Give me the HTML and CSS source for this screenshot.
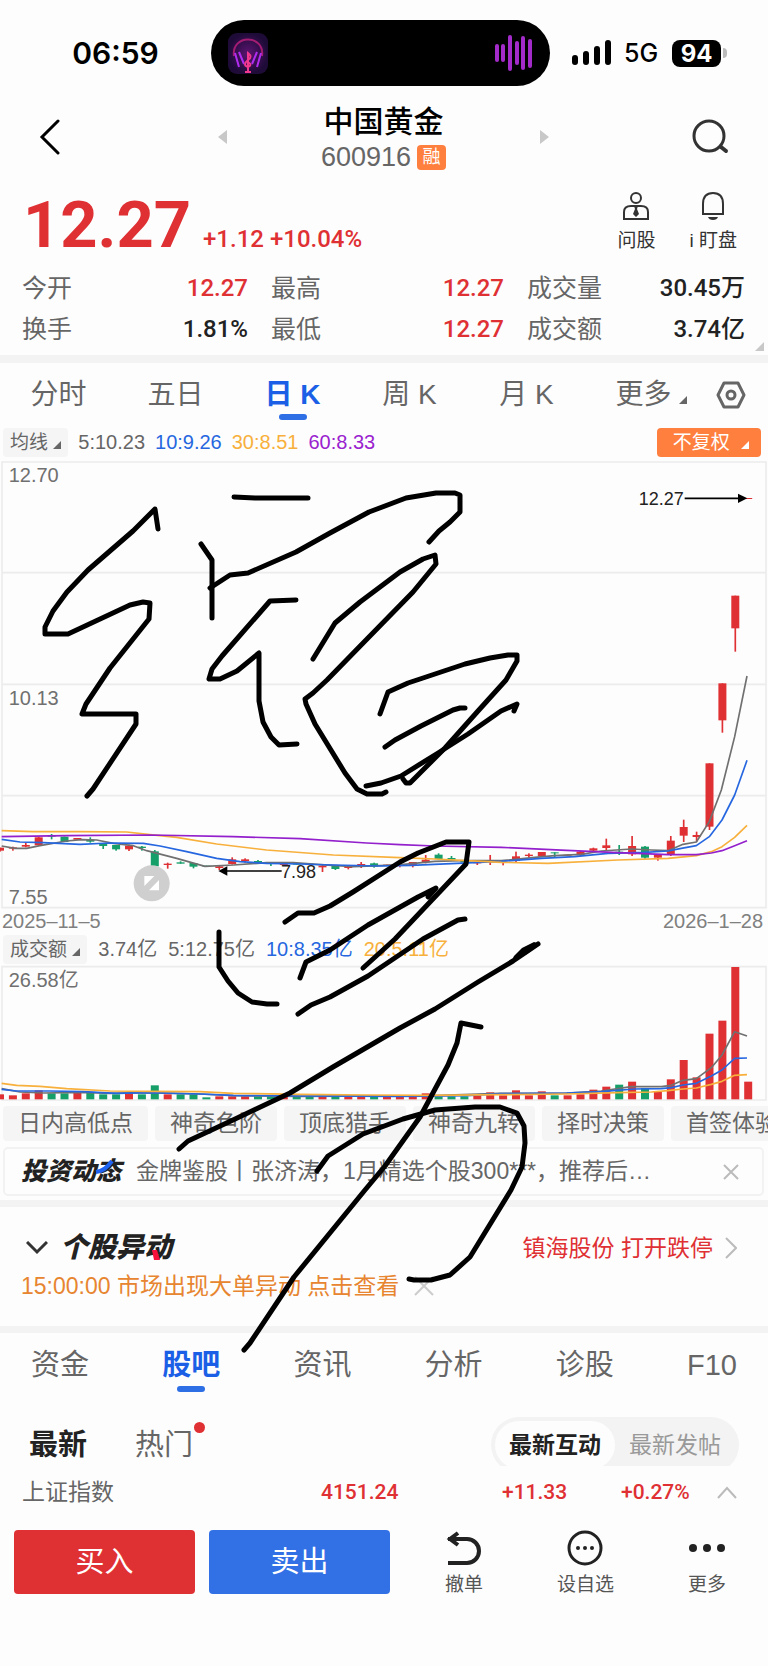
FILE: index.html
```
<!DOCTYPE html>
<html lang="zh-CN">

<head>
    <meta charset="utf-8">
    <meta name="viewport" content="width=device-width, initial-scale=1">
    <title>中国黄金 600916</title>
    <link rel="stylesheet" href="styles.css">
</head>

<body>
    <div class="phone">
        <div class="statusbar">
            <div class="time">06:59</div>
            <div class="island">
                <svg class="cover" viewBox="0 0 40 41">
                    <defs>
                        <radialGradient id="coverbg">
                            <stop offset="0" stop-color="#5b1470" />
                            <stop offset="1" stop-color="#1e0b38" />
                        </radialGradient>
                    </defs>
                    <rect width="40" height="41" rx="9" fill="url(#coverbg)" />
                    <path d="M6 23C3 1 37 1 34 23" fill="none" stroke="#a31d73" stroke-width="2" />
                    <path d="M7 20l4 14M11 19l5 12M33 20l-4 14M29 19l-5 12" stroke="#b02df0" stroke-width="2" />
                    <path d="M20 38V20q5 4 0 7q-6 5 0 7q5-2 0-5M17 39h6" fill="none" stroke="#f0388e" stroke-width="2" />
                </svg>
                <svg class="waves" viewBox="0 0 38 36">
                    <path d="M2 11v14M8 11v14M15 2v32M22 8v20M28 3v30M35 6v25" stroke="#a32bc9" stroke-width="4" stroke-linecap="round" />
                </svg>
            </div>
            <div class="signals">
                <svg class="bars" viewBox="0 0 39 26">
                    <path d="M3 18v4M14 14v8M25 9v13M36 3v19" stroke="#000" stroke-width="6" stroke-linecap="round" />
                </svg>
                <span class="net">5G</span>
                <span class="battery">94</span><span class="nub"></span>
            </div>
        </div>

        <header class="head">
            <button class="icon-btn back" aria-label="返回">
                <svg width="22" height="36" viewBox="0 0 22 36"><path d="M20 2L4 18l16 16" fill="none" stroke="#000" stroke-width="3" stroke-linecap="round" /></svg>
            </button>
            <button class="icon-btn" aria-label="上一只">
                <svg width="10" height="14" viewBox="0 0 10 14"><path d="M9 0v14L0 7z" fill="#c8c8c8" /></svg>
            </button>
            <div class="name">
                <h1>中国黄金</h1>
                <div class="code">600916 <span class="badge">融</span></div>
            </div>
            <button class="icon-btn" aria-label="下一只">
                <svg width="10" height="14" viewBox="0 0 10 14"><path d="M1 0v14l9-7z" fill="#c8c8c8" /></svg>
            </button>
            <button class="icon-btn search" aria-label="搜索">
                <svg width="38" height="36" viewBox="0 0 38 36"><circle cx="17" cy="17" r="15" fill="none" stroke="#333" stroke-width="3" /><path d="M29 28l5 4" stroke="#333" stroke-width="4" stroke-linecap="round" /></svg>
            </button>
        </header>

        <section class="quote">
            <div class="price">12.27</div>
            <div class="change">+1.12 +10.04%</div>
            <div class="tools">
                <button class="tool">
                    <svg width="28" height="30" viewBox="0 0 28 30"><g fill="none" stroke="#333" stroke-width="2"><circle cx="14" cy="7" r="5" /><path d="M9 15q-7 0-7 6v7h24v-7q0-6-7-6z" /></g><path d="M12 15h4l-1 3 2 5-3 3-3-3 2-5z" fill="#333" /></svg>
                    问股
                </button>
                <button class="tool">
                    <svg width="28" height="30" viewBox="0 0 28 30"><path d="M4 23V13q0-11 10-11t10 11v10z" fill="none" stroke="#333" stroke-width="2" /><path d="M9 26h10q-1 3-5 3t-5-3z" fill="#333" /></svg>
                    i 盯盘
                </button>
            </div>
        </section>

        <dl class="stats">
            <div><dt>今开</dt><dd class="up">12.27</dd></div>
            <div><dt>最高</dt><dd class="up">12.27</dd></div>
            <div><dt>成交量</dt><dd>30.45万</dd></div>
            <div><dt>换手</dt><dd>1.81%</dd></div>
            <div><dt>最低</dt><dd class="up">12.27</dd></div>
            <div><dt>成交额</dt><dd>3.74亿</dd></div>
        </dl>

        <nav class="periods">
            <button>分时</button>
            <button>五日</button>
            <button class="active">日 K</button>
            <button>周 K</button>
            <button>月 K</button>
            <button class="more">更多 <i class="tri"></i></button>
            <button aria-label="设置">
                <svg width="30" height="28" viewBox="0 0 30 28"><path d="M8 2h14l6 12-6 12H8L2 14z" fill="none" stroke="#666" stroke-width="3" stroke-linejoin="round" /><circle cx="15" cy="14" r="4" fill="none" stroke="#666" stroke-width="3" /></svg>
            </button>
        </nav>

        <div class="legend">
            <button class="pick">均线 <i class="tri"></i></button>
            <span class="gray">5:10.23</span>
            <span class="blue">10:9.26</span>
            <span class="yellow">30:8.51</span>
            <span class="purple">60:8.33</span>
            <button class="adjust">不复权 <i class="tri"></i></button>
        </div>

        <!-- chart units are a third of a pixel -->
        <svg class="chart" viewBox="0 3 2304 1344">
            <path class="grid" d="M6 6H2298V1343H6zM6 338H2298M6 673H2298M6 1007H2298" />
            <g id="candles"></g>
            <polyline class="line c-gray" points="5,1158 45,1165 80,1165 120,1157 200,1143 245,1139 290,1140 340,1150 400,1157 440,1172 530,1195 615,1219 700,1215 800,1208 880,1208 960,1214 1060,1220 1140,1217 1204,1214 1304,1204 1384,1202 1504,1202 1604,1192 1664,1187 1744,1183 1804,1173 1894,1167 1954,1170 2004,1172 2049,1153 2089,1146 2128,1085 2164,990 2204,830 2241,648" />
            <polyline class="line c-blue" points="5,1138 60,1146 130,1148 240,1153 330,1149 430,1150 480,1158 560,1175 650,1195 720,1205 800,1210 900,1212 1000,1215 1140,1218 1234,1216 1354,1211 1504,1204 1624,1195 1724,1190 1824,1180 1934,1177 2004,1173 2044,1165 2089,1157 2128,1130 2166,1080 2204,1005 2241,901" />
            <polyline class="line c-yellow" points="5,1112 100,1115 240,1115 380,1116 450,1124 530,1132 650,1152 800,1170 1000,1185 1200,1193 1304,1197 1504,1207 1644,1210 1854,1200 2004,1195 2089,1187 2134,1175 2166,1160 2204,1132 2241,1096" />
            <polyline class="line c-purple" points="5,1130 200,1127 450,1125 700,1130 900,1136 1100,1149 1200,1154 1304,1158 1504,1162 1700,1171 1854,1178 2004,1184 2089,1184 2134,1179 2166,1172 2204,1157 2241,1142" />
            <text class="scale" x="26" y="65">12.70</text>
            <text class="scale" x="26" y="735">10.13</text>
            <text class="scale" x="26" y="1333">7.55</text>
            <text class="mark" x="1916" y="136">12.27</text>
            <path class="arrow" d="M2054 115H2220" />
            <path d="M2214 101l28 14-28 14z" />
            <text class="mark" x="843" y="1253">7.98</text>
            <path class="arrow" d="M845 1233H675" />
            <path d="M682 1219l-27 14 27 14z" />
            <circle cx="455" cy="1270" r="54" fill="#cfcfcf" />
            <path d="M433 1248h30l-30 30zM477 1260v31h-30z" fill="#fff" />
        </svg>
        <div class="dates"><span>2025–11–5</span><span>2026–1–28</span></div>

        <div class="legend amount">
            <button class="pick">成交额 <i class="tri"></i></button>
            <span class="gray">3.74亿</span>
            <span class="gray">5:12.75亿</span>
            <span class="blue">10:8.35亿</span>
            <span class="yellow">20:5.11亿</span>
        </div>
        <svg class="chart" viewBox="0 132 2304 408">
            <path class="grid" d="M6 137H2298V537H6z" />
            <g id="volumes"></g>
            <polyline class="line c-gray" points="5,503 60,513 130,516 250,514 330,517 420,515 600,519 700,524 900,526 1300,524 1500,517 1700,516 1804,510 1894,497 1984,497 2014,493 2049,478 2089,473 2134,440 2166,402 2204,332 2241,345" />
            <polyline class="line c-blue" points="5,505 50,510 150,510 250,512 350,517 450,515 600,519 700,523 900,525 1200,526 1400,524 1504,518 1700,516 1804,512 1904,504 1984,503 2014,500 2049,492 2089,487 2134,465 2166,447 2204,412 2241,411" />
            <polyline class="line c-yellow" points="5,487 50,493 120,496 200,503 330,510 450,511 600,512 700,517 900,520 1100,522 1304,523 1500,521 1700,519 1854,515 1954,513 2004,509 2049,504 2089,501 2134,490 2166,481 2204,463 2241,461" />
            <text class="scale" x="26" y="198">26.58亿</text>
        </svg>

        <div class="chips">
            <button>日内高低点</button>
            <button>神奇色阶</button>
            <button>顶底猎手</button>
            <button>神奇九转</button>
            <button>择时决策</button>
            <button>首签体验</button>
        </div>

        <div class="notice">
            <b class="logo">投资动态<svg class="swoosh" viewBox="0 0 20 16"><path d="M1 13Q10 12 17 2" fill="none" stroke="#1f63f0" stroke-width="4" /></svg></b>
            <a href="#">金牌鉴股丨张济涛，1月精选个股300***，推荐后…</a>
            <button class="icon-btn" aria-label="关闭">
                <svg width="16" height="16" viewBox="0 0 16 16"><path d="M1 1l14 14M15 1L1 15" stroke="#bbb" stroke-width="2" /></svg>
            </button>
        </div>

        <section class="moves">
            <div class="moves-row">
                <svg width="22" height="14" viewBox="0 0 22 14"><path d="M1 1l10 10L21 1" fill="none" stroke="#333" stroke-width="3" /></svg>
                <b class="logo big">个股异动<svg class="spark" viewBox="0 0 8 10"><path d="M0 0h5l3 10H2z" fill="#f5103c" /></svg></b>
                <a href="#" class="hot">镇海股份 打开跌停</a>
                <svg width="12" height="22" viewBox="0 0 12 22"><path d="M1 1l10 10L1 21" fill="none" stroke="#bbb" stroke-width="2" /></svg>
            </div>
            <div class="moves-row alert">
                <a href="#">15:00:00 市场出现大单异动 点击查看</a>
                <button class="icon-btn" aria-label="关闭">
                    <svg width="20" height="20" viewBox="0 0 20 20"><path d="M1 1l18 18M19 1L1 19" stroke="#ccc" stroke-width="2" /></svg>
                </button>
            </div>
        </section>

        <nav class="sections">
            <button>资金</button>
            <button class="active">股吧</button>
            <button>资讯</button>
            <button>分析</button>
            <button>诊股</button>
            <button>F10</button>
        </nav>

        <div class="feed">
            <button class="sort on">最新</button>
            <button class="sort dot">热门</button>
            <div class="switch">
                <button class="on">最新互动</button>
                <button>最新发帖</button>
            </div>
        </div>

        <div class="index">
            <span>上证指数</span>
            <b>4151.24</b>
            <b>+11.33</b>
            <b>+0.27%</b>
            <svg width="20" height="13" viewBox="0 0 20 13"><path d="M1 12L10 2l9 10" fill="none" stroke="#bbb" stroke-width="2" /></svg>
        </div>

        <footer class="trade">
            <button class="deal buy">买入</button>
            <button class="deal sell">卖出</button>
            <div class="actions">
                <button class="tool">
                    <svg width="36" height="36" viewBox="0 0 36 36"><path d="M2 9h19a12 12 0 0 1 0 24H2M12 3L4 9l8 6" fill="none" stroke="#222" stroke-width="4" /></svg>
                    撤单
                </button>
                <button class="tool">
                    <svg width="36" height="36" viewBox="0 0 36 36"><circle cx="18" cy="18" r="16" fill="none" stroke="#222" stroke-width="3" /><g fill="#222"><circle cx="11" cy="18" r="2" /><circle cx="18" cy="18" r="2" /><circle cx="25" cy="18" r="2" /></g></svg>
                    设自选
                </button>
                <button class="tool">
                    <svg width="36" height="36" viewBox="0 0 36 36"><g fill="#222"><circle cx="4" cy="18" r="4" /><circle cx="18" cy="18" r="4" /><circle cx="32" cy="18" r="4" /></g></svg>
                    更多
                </button>
            </div>
        </footer>

        <!-- pen strokes drawn over the page -->
        <svg class="ink" viewBox="0 0 768 1666">
            <polyline points="158,529 155,509 133,531 88,570 67,592 53,611 45,627 45,634 68,634 130,605 143,602 150,603 149,619 110,668 86,704 82,714 136,714 136,724 93,789 87,796" />
            <polyline points="234,497 255,498 308,498" />
            <polyline points="201,544 212,560 212,618" />
            <polyline points="210,588 230,575 248,573 296,552 330,533 369,512 406,498 436,493 455,493 460,495 460,512 450,522 439,531 429,542" />
            <polyline points="296,600 270,601 222,656 212,669 209,679 220,679 237,671 259,653 259,701 263,722 271,737 279,745 297,744" />
            <polyline points="313,659 335,623 360,602 400,572 423,559 435,555 436,564 413,592 368,638 327,680 313,693 305,699 306,704 315,724 345,773 357,789 367,794 382,794 386,792" />
            <polyline points="380,714 388,692 408,683 465,664 490,658 508,655 517,655 517,661 506,680 478,711 445,748 410,783 406,783 403,779" />
            <polyline points="385,747 395,740 421,726 453,710 460,708 465,708" />
            <polyline points="366,786 381,783 401,776 438,753 468,734 501,711 517,704 514,711" />
            <polyline points="285,922 298,913 314,913 330,906 353,892 400,862 418,853 446,842 469,842 466,864 395,939 363,968" />
            <polyline points="428,897 436,888 418,897 368,925 330,950 306,962 300,978" />
            <polyline points="465,919 458,920 423,939 368,976 330,997 311,1005 298,1014" />
            <polyline points="219,932 219,967 228,981 238,993 252,1002 267,1004 277,1004" />
            <polyline points="179,1149 188,1141 233,1120 290,1093 333,1067 400,1028 435,1009 478,982 513,961 538,944" />
            <path d="M540 944l-6-2-12 6-8 8-3 6 16-8z" />
            <polyline points="481,1027 461,1023 457,1043 448,1065 420,1117 385,1166 365,1190 294,1277 250,1343 244,1350" />
            <polyline points="317,1171 328,1156 363,1134 403,1119 435,1110 475,1107 500,1107 517,1113 524,1126 525,1143 522,1167 511,1190 470,1257 450,1275 431,1280 414,1280 409,1279" />
        </svg>
    </div>
    <script>
        const NS = "http://www.w3.org/2000/svg"
        const STEP = 38.7

        /* colour, open/close top, bottom, high, low */
        const candles = [
            ["r", 1163, 1172, 1163, 1175], ["r", 1162, 1166, 1160, 1172], ["r", 1155, 1160, 1148, 1162],
            ["r", 1132, 1156, 1130, 1156], ["g", 1126, 1130, 1122, 1138], ["g", 1130, 1146, 1130, 1146],
            ["r", 1134, 1139, 1134, 1139], ["g", 1139, 1145, 1132, 1148], ["g", 1152, 1158, 1150, 1167],
            ["g", 1155, 1168, 1155, 1172], ["r", 1157, 1168, 1154, 1173], ["g", 1160, 1164, 1158, 1172],
            ["g", 1174, 1219, 1170, 1226], ["r", 1211, 1215, 1208, 1226], ["g", 1207, 1211, 1204, 1211],
            ["g", 1209, 1220, 1209, 1225], ["g", 1217, 1220, 1217, 1220], ["r", 1219, 1224, 1217, 1230],
            ["r", 1198, 1212, 1192, 1214], ["r", 1198, 1203, 1195, 1208], ["g", 1203, 1208, 1200, 1210],
            ["g", 1208, 1212, 1206, 1218], ["r", 1212, 1215, 1212, 1215], ["g", 1210, 1214, 1210, 1214],
            ["g", 1211, 1215, 1211, 1215], ["r", 1217, 1222, 1215, 1236], ["g", 1217, 1227, 1217, 1230],
            ["r", 1219, 1224, 1217, 1228], ["r", 1212, 1218, 1206, 1224], ["g", 1210, 1220, 1208, 1223],
            ["r", 1214, 1218, 1214, 1218], ["r", 1213, 1217, 1213, 1222], ["r", 1206, 1215, 1206, 1222],
            ["r", 1199, 1207, 1185, 1210], ["g", 1184, 1197, 1180, 1200], ["g", 1194, 1199, 1188, 1203],
            ["g", 1203, 1207, 1203, 1207], ["r", 1206, 1210, 1203, 1215], ["r", 1203, 1206, 1185, 1215],
            ["r", 1205, 1209, 1203, 1216], ["r", 1189, 1203, 1175, 1206], ["r", 1184, 1188, 1180, 1193],
            ["r", 1176, 1189, 1176, 1189], ["g", 1177, 1180, 1177, 1192], ["r", 1184, 1187, 1184, 1187],
            ["r", 1175, 1186, 1173, 1188], ["r", 1165, 1172, 1163, 1175], ["r", 1156, 1164, 1136, 1172],
            ["g", 1175, 1180, 1155, 1185], ["r", 1158, 1183, 1128, 1188], ["g", 1160, 1193, 1158, 1196],
            ["r", 1184, 1193, 1182, 1202], ["r", 1142, 1184, 1128, 1188], ["r", 1101, 1127, 1079, 1146],
            ["r", 1125, 1131, 1115, 1145], ["r", 910, 1100, 910, 1110], ["r", 670, 781, 670, 818],
            ["r", 407, 505, 407, 575], ["r", 114, 117, 114, 117]
        ]
        const volumes = [15, 12, 18, 27, 18, 18, 21, 21, 15, 15, 18, 15, 42, 15, 15, 15, 6, 9, 9, 9,
            9, 9, 12, 9, 9, 9, 9, 9, 9, 9, 9, 9, 9, 18, 9, 9, 9, 12, 21, 12,
            27, 12, 24, 12, 12, 15, 29, 38, 44, 53, 34, 22, 60, 118, 66, 197, 236, 397, 53]

        function bar(parent, color, x, y, w, h) {
            const rect = document.createElementNS(NS, "rect")
            rect.setAttribute("class", color)
            rect.setAttribute("x", x - w / 2)
            rect.setAttribute("y", y)
            rect.setAttribute("width", w)
            rect.setAttribute("height", h)
            parent.appendChild(rect)
        }

        const candleBox = document.getElementById("candles")
        const volumeBox = document.getElementById("volumes")
        candles.forEach(function (c, i) {
            const x = i * STEP
            bar(candleBox, c[0], x, c[1], 24, c[2] - c[1])
            bar(candleBox, c[0], x, c[3], 5, c[4] - c[3])
            bar(volumeBox, c[0], x, 535 - volumes[i], 24, volumes[i])
        })
    </script>
</body>

</html>
```
FILE: styles.css
```
* {
    box-sizing: border-box;
}

body {
    margin: 0;
    background: #fdfdfd;
    color: #666;
    font-family: "Liberation Sans", "Noto Sans CJK SC", sans-serif;
    font-size: 23px;
}

button {
    border: none;
    padding: 0;
    margin: 0;
    background: none;
    color: inherit;
    font: inherit;
    white-space: nowrap;
    cursor: pointer;
}

a {
    color: inherit;
    text-decoration: none;
}

svg {
    display: block;
    flex: none;
}

.phone {
    position: relative;
    min-height: 100vh;
    overflow: hidden;
}

.statusbar {
    display: grid;
    grid-template-columns: 211fr 339fr 218fr;
    padding-top: 20px;
    align-items: center;
    color: #000;
}

.time {
    padding-left: 20px;
    text-align: center;
    font-family: Inter, sans-serif;
    font-size: 30px;
    font-weight: 600;
}

.island {
    height: 66px;
    padding: 0 17px;
    border-radius: 33px;
    background: #000;
    display: flex;
    align-items: center;
    justify-content: space-between;
}

.cover {
    width: 40px;
}

.waves {
    width: 38px;
}

.signals {
    display: flex;
    align-items: center;
    padding-left: 22px;
}

.bars {
    width: 39px;
}

.net {
    margin: 0 14px 0 13px;
    font-family: Inter, sans-serif;
    font-size: 25px;
    font-weight: 500;
}

.battery {
    width: 49px;
    border-radius: 8px;
    background: #000;
    color: #fff;
    text-align: center;
    font-family: Inter, sans-serif;
    font-size: 24px;
    font-weight: 700;
    line-height: 27px;
}

.nub {
    width: 4px;
    height: 10px;
    margin-left: 2px;
    border-radius: 0 4px 4px 0;
    background: #bbb;
}

.head {
    display: flex;
    justify-content: space-between;
    align-items: center;
    padding: 16px 38px 0;
}

.name {
    width: 180px;
    text-align: center;
}

.name h1 {
    margin: 0;
    color: #000;
    font-size: 30px;
    font-weight: 500;
    line-height: 40px;
}

.code {
    display: flex;
    justify-content: center;
    align-items: center;
    gap: 6px;
    font-size: 27px;
    line-height: 30px;
}

.badge {
    width: 29px;
    border-radius: 4px;
    background: #ff7f3f;
    color: #fff;
    font-size: 18px;
    line-height: 25px;
}

.back {
    margin-right: 92px;
}

.search {
    margin-left: 77px;
}

.quote {
    display: flex;
    align-items: baseline;
    padding: 17px 31px 0 23px;
    color: #df3034;
    font-family: Roboto, sans-serif;
    font-weight: 500;
}

.price {
    font-size: 65px;
    font-weight: 700;
    line-height: 72px;
}

.change {
    margin-left: 12px;
    font-size: 24px;
}

.tools {
    display: flex;
    align-self: flex-start;
    gap: 34px;
    margin-left: auto;
    padding-top: 2px;
    font-family: "Liberation Sans", "Noto Sans CJK SC", sans-serif;
}

.tool {
    display: flex;
    flex-direction: column;
    align-items: center;
    gap: 6px;
    color: #333;
    font-size: 19px;
    font-weight: 400;
    line-height: 28px;
}

.stats {
    position: relative;
    display: grid;
    grid-template-columns: 226fr 233fr 218fr;
    column-gap: 23px;
    margin: 0;
    padding: 7px 23px 5px 22px;
    border-bottom: 8px solid #f3f3f3;
    font-size: 25px;
    line-height: 41px;
}

.stats::after {
    content: "";
    position: absolute;
    right: 4px;
    bottom: 4px;
    border-left: 9px solid transparent;
    border-bottom: 9px solid #c8c8c8;
}

.stats div {
    display: flex;
    justify-content: space-between;
}

.stats dd {
    margin: 0;
    color: #222;
    font-family: Roboto, "Noto Sans CJK SC", sans-serif;
    font-size: 24px;
    font-weight: 500;
}

.stats .up {
    color: #df3034;
}

.periods {
    display: grid;
    grid-template-columns: repeat(6, 117fr) 58fr;
    padding-right: 8px;
    font-size: 28px;
    line-height: 63px;
}

.periods button,
.sections button {
    position: relative;
}

.periods .more {
    padding-left: 16px;
}

.periods .active,
.sections .active {
    color: #1a5fe6;
    font-weight: 700;
}

.periods .active::after,
.sections .active::after {
    content: "";
    position: absolute;
    left: 50%;
    bottom: 6px;
    width: 28px;
    height: 6px;
    margin-left: -14px;
    border-radius: 3px;
    background: #2f6fe6;
}

.periods svg {
    margin: 0 auto;
}

.tri {
    display: inline-block;
    border-left: 8px solid transparent;
    border-bottom: 8px solid currentColor;
}

.legend {
    display: flex;
    align-items: center;
    gap: 10px;
    padding: 2px 7px 4px 3px;
    font-size: 20px;
    line-height: 29px;
}

.amount {
    gap: 11px;
    padding-bottom: 1px;
}

.pick {
    padding: 0 7px;
    border-radius: 4px;
    background: #f5f5f5;
    font-size: 19px;
}

.adjust {
    margin-left: auto;
    padding: 0 12px 0 16px;
    border-radius: 4px;
    background: #ff7f3f;
    color: #fff;
    font-size: 19px;
}

.adjust .tri {
    margin-left: 6px;
}

.blue {
    color: #2667e0;
}

.yellow {
    color: #f8b03c;
}

.purple {
    color: #9a22cf;
}

.chart {
    width: 100%;
}

.chart .r {
    fill: #df3034;
}

.chart .g {
    fill: #169f69;
}

.grid {
    fill: none;
    stroke: #ececec;
    stroke-width: 5;
}

.line {
    fill: none;
    stroke-width: 5;
    stroke-linejoin: round;
}

.c-gray {
    stroke: #707070;
}

.c-blue {
    stroke: #2667e0;
}

.c-yellow {
    stroke: #f8b03c;
}

.c-purple {
    stroke: #9320cc;
}

.scale {
    fill: #707070;
    font-size: 60px;
}

.mark {
    fill: #222;
    font-size: 54px;
}

.arrow {
    stroke: #000;
    stroke-width: 5;
}

.dates {
    display: flex;
    justify-content: space-between;
    padding: 0 5px 0 2px;
    color: #808080;
    font-size: 20px;
    line-height: 24px;
}

.chips {
    display: flex;
    gap: 7px;
    margin-top: 5px;
    padding-left: 3px;
    overflow: hidden;
}

.chips button {
    flex: none;
    padding: 0 15px;
    border-radius: 4px;
    background: #f5f5f5;
    line-height: 35px;
}

.notice {
    display: flex;
    align-items: center;
    margin: 6px 4px 4px 3px;
    padding: 0 23px 0 16px;
    border: 2px solid #f2f2f2;
    border-radius: 5px;
    line-height: 45px;
}

.notice a {
    flex: 1;
    margin-left: 15px;
    white-space: nowrap;
    overflow: hidden;
}

.logo {
    position: relative;
    color: #222;
    font-size: 25px;
    font-style: italic;
    font-weight: 900;
}

.swoosh {
    position: absolute;
    right: 6px;
    top: 10px;
    width: 20px;
}

.spark {
    position: absolute;
    right: 12px;
    bottom: 7px;
    width: 8px;
}

.moves {
    padding: 22px 31px 21px 21px;
    border-top: 7px solid #f3f3f3;
    border-bottom: 7px solid #f3f3f3;
    line-height: 38px;
}

.moves-row {
    display: flex;
    align-items: center;
    gap: 12px;
    padding-left: 5px;
}

.big {
    font-size: 28px;
}

.hot {
    margin-left: auto;
    color: #df3034;
}

.alert {
    gap: 15px;
    padding-left: 0;
    color: #e78530;
}

.sections {
    display: flex;
    justify-content: space-between;
    padding: 0 31px;
    font-size: 29px;
    line-height: 65px;
}

.feed {
    display: flex;
    align-items: flex-start;
    height: 68px;
    padding: 19px 29px 0;
    overflow: hidden;
    font-size: 29px;
}

.sort {
    position: relative;
    margin-right: 48px;
    line-height: 56px;
}

.on {
    color: #222;
    font-weight: 700;
}

.dot::after {
    content: "";
    position: absolute;
    right: -12px;
    top: 5px;
    width: 11px;
    height: 11px;
    border-radius: 50%;
    background: #df3034;
}

.switch {
    display: flex;
    margin-left: auto;
    padding: 4px;
    border-radius: 28px;
    background: #f3f3f3;
    color: #999;
    font-size: 23px;
    line-height: 48px;
}

.switch button {
    padding: 0 14px;
    border-radius: 25px;
}

.switch .on {
    background: #fdfdfd;
}

.index {
    display: grid;
    grid-template-columns: 299fr 181fr 119fr 96fr 20fr;
    align-items: center;
    padding: 0 31px 0 22px;
    line-height: 52px;
}

.index b {
    color: #df3034;
    font-family: Roboto, sans-serif;
    font-size: 21px;
    font-weight: 500;
}

.trade {
    display: grid;
    grid-template-columns: 181fr 181fr 340fr;
    align-items: start;
    gap: 14px;
    padding: 12px 24px 0 14px;
}

.deal {
    border-radius: 4px;
    color: #fff;
    font-size: 29px;
    line-height: 64px;
}

.buy {
    background: #df3034;
}

.sell {
    background: #3270e6;
}

.actions {
    display: flex;
    justify-content: space-between;
    padding: 0 18px 0 41px;
}

.actions .tool {
    gap: 7px;
    color: #555;
    line-height: 24px;
}

.ink {
    position: absolute;
    left: 0;
    top: 0;
    width: 100%;
    pointer-events: none;
}

.ink polyline {
    fill: none;
    stroke: #000;
    stroke-width: 5;
    stroke-linecap: round;
    stroke-linejoin: round;
}
```
